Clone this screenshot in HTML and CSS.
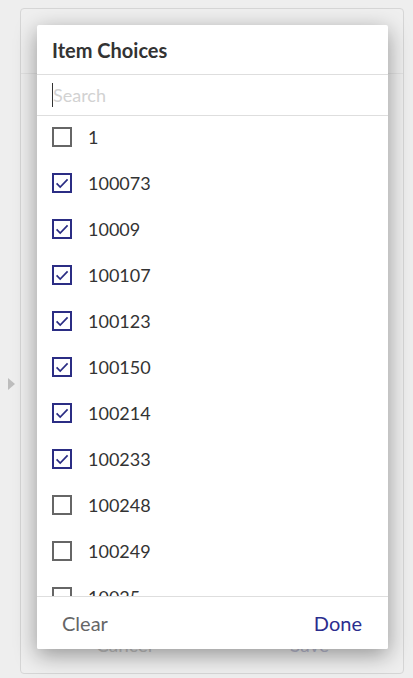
FILE: index.html
```html
<!DOCTYPE html>
<html lang="en">
<head>
  <meta charset="UTF-8">
  <meta name="viewport" content="width=device-width, initial-scale=1.0">
  <title>Item Choices</title>
  <link rel="stylesheet" href="styles.css">
</head>
<body>
  <div class="page">
    <div class="side">
      <span class="side-arrow"></span>
    </div>

    <div class="sheet">
      <div class="sheet-head"></div>
      <div class="sheet-body"></div>
      <div class="sheet-foot">
        <span class="sheet-cancel">Cancel</span>
        <span class="sheet-save">Save</span>
      </div>

      <div class="modal">
        <div class="modal-head">Item Choices</div>
        <div class="modal-search">
          <span class="caret"></span>
          <span class="placeholder">Search</span>
        </div>
        <ul class="choices">
          <li><span class="box"></span>1</li>
          <li><span class="box checked"><svg viewBox="0 0 16 16"><path d="M2.6 8.4l3.6 3.6L13.6 4.4"/></svg></span>100073</li>
          <li><span class="box checked"><svg viewBox="0 0 16 16"><path d="M2.6 8.4l3.6 3.6L13.6 4.4"/></svg></span>10009</li>
          <li><span class="box checked"><svg viewBox="0 0 16 16"><path d="M2.6 8.4l3.6 3.6L13.6 4.4"/></svg></span>100107</li>
          <li><span class="box checked"><svg viewBox="0 0 16 16"><path d="M2.6 8.4l3.6 3.6L13.6 4.4"/></svg></span>100123</li>
          <li><span class="box checked"><svg viewBox="0 0 16 16"><path d="M2.6 8.4l3.6 3.6L13.6 4.4"/></svg></span>100150</li>
          <li><span class="box checked"><svg viewBox="0 0 16 16"><path d="M2.6 8.4l3.6 3.6L13.6 4.4"/></svg></span>100214</li>
          <li><span class="box checked"><svg viewBox="0 0 16 16"><path d="M2.6 8.4l3.6 3.6L13.6 4.4"/></svg></span>100233</li>
          <li><span class="box"></span>100248</li>
          <li><span class="box"></span>100249</li>
          <li><span class="box"></span>10025</li>
          <li><span class="box"></span>100251</li>
        </ul>
        <div class="modal-foot">
          <span class="btn-clear">Clear</span>
          <span class="btn-done">Done</span>
        </div>
      </div>
    </div>
  </div>
</body>
</html>
```

FILE: styles.css
```css
body {
  margin: 0;
  background-color: #eeeeee;
  font-family: 'Lato', 'Open Sans', sans-serif;
  color: #333;
}
.page {
  display: flex;
  height: 678px;
  padding: 8px 9px 4px 0;
  box-sizing: border-box;
}
.side {
  width: 20px;
  flex-shrink: 0;
  padding-top: 370px;
  box-sizing: border-box;
}
.side-arrow {
  display: block;
  width: 0;
  height: 0;
  margin-left: 8px;
  border-top: 6px solid transparent;
  border-bottom: 6px solid transparent;
  border-left: 7px solid #bdbdbd;
}
.sheet {
  position: relative;
  flex: 1;
  display: flex;
  flex-direction: column;
  background-color: #efefef;
  border: 1px solid #d6d6d6;
  border-radius: 4px;
}
.sheet-head {
  height: 64px;
  border-bottom: 1px solid #e2e2e2;
}
.sheet-body {
  flex: 1;
}
.sheet-foot {
  display: flex;
  justify-content: space-between;
  padding: 0 74px 17px 75px;
  font-size: 19px;
  color: #c4c4c4;
}
.sheet-save {
  color: #bcbdd2;
}
.modal {
  position: absolute;
  top: 16px;
  left: 16px;
  width: 351px;
  height: 624px;
  display: flex;
  flex-direction: column;
  background-color: #fff;
  border-radius: 2px;
  box-shadow: 0 6px 22px rgba(0,0,0,0.38);
  overflow: hidden;
}
.modal-head {
  height: 49px;
  padding: 0 15px;
  display: flex;
  align-items: center;
  font-size: 20px;
  font-weight: bold;
  color: #333;
  border-bottom: 1px solid #dedede;
}
.modal-search {
  height: 40px;
  padding: 0 15px;
  display: flex;
  align-items: center;
  border-bottom: 1px solid #dedede;
  font-size: 18px;
}
.caret {
  width: 1px;
  height: 24px;
  background-color: #333;
}
.placeholder {
  color: #d2d2d2;
}
.choices {
  flex: 1;
  margin: -2px 0 0;
  padding: 0;
  list-style: none;
  overflow: hidden;
}
.choices li {
  height: 46px;
  display: flex;
  align-items: center;
  padding-left: 15px;
  font-size: 18px;
  color: #333;
}
.box {
  width: 20px;
  height: 20px;
  box-sizing: border-box;
  border: 2px solid #666;
  margin-right: 16px;
  display: flex;
  align-items: center;
  justify-content: center;
}
.box.checked {
  border-color: #2b2d84;
}
.box svg {
  width: 16px;
  height: 16px;
  fill: none;
  stroke: #2b2d84;
  stroke-width: 1.7;
}
.modal-foot {
  height: 52px;
  flex-shrink: 0;
  display: flex;
  align-items: center;
  justify-content: space-between;
  padding: 0 26px 0 25px;
  border-top: 1px solid #dedede;
  font-size: 20px;
  position: relative;
  background-color: #fff;
}
.btn-clear {
  color: #666;
}
.btn-done {
  color: #2b2d8e;
}
```
